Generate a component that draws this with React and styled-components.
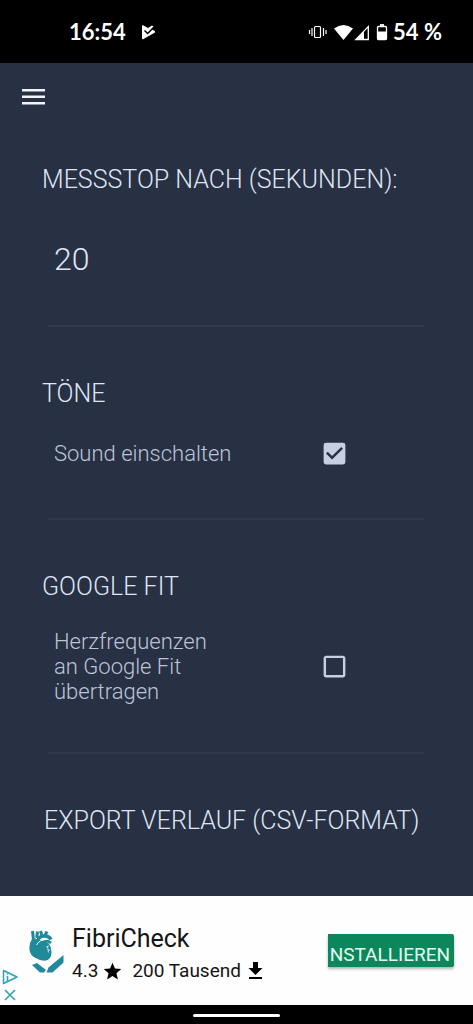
import { useState } from "react";
import styled, { createGlobalStyle } from "styled-components";
import { MdCheckBox, MdCheckBoxOutlineBlank, MdStar } from "react-icons/md";

const App = () => {
  const [seconds, setSeconds] = useState("20");
  const [sound, setSound] = useState(true);
  const [googleFit, setGoogleFit] = useState(false);

  return (
    <Page>
      <GlobalStyle />
      <StatusBar>
        <StatusGroup $gap={14}>
          <span>16:54</span>
          <PlayIcon />
        </StatusGroup>
        <StatusGroup $gap={1}>
          <SignalIcons />
          <span>54 %</span>
        </StatusGroup>
      </StatusBar>

      <Header>
        <MenuButton type="button" aria-label="Menü">
          <svg width="24" height="18" viewBox="0 0 24 18" fill="currentColor">
            <path d="M1 1h23v2.500H1zM1 7.500h23V10H1zM1 14h23v2.500H1z" />
          </svg>
        </MenuButton>
      </Header>

      <Settings>
        <Section>
          <Heading as="label" htmlFor="seconds">MESSSTOP NACH (SEKUNDEN):</Heading>
          <NumberInput
            id="seconds"
            inputMode="numeric"
            value={seconds}
            onChange={(e) => setSeconds(e.target.value)}
          />
        </Section>
        <Divider />
        <Section>
          <Heading>TÖNE</Heading>
          <CheckRow id="sound" text="Sound einschalten" checked={sound} onChange={setSound} />
        </Section>
        <Divider />
        <Section>
          <Heading>GOOGLE FIT</Heading>
          <CheckRow
            id="fit"
            text="Herzfrequenzen an Google Fit übertragen"
            checked={googleFit}
            onChange={setGoogleFit}
          />
        </Section>
        <Divider />
        <ExportButton type="button">EXPORT VERLAUF (CSV-FORMAT)</ExportButton>
      </Settings>

      <AdBanner>
        <AdControls>
          <AdControl type="button" aria-label="AdChoices">
            <svg width="16" height="16" viewBox="0 0 16 16" fill="none" stroke="currentColor">
              <path d="M1.500 1.500v13L15 8z" strokeWidth="1.500" strokeLinejoin="round" />
              <path d="M5.500 7v5M5.500 4.500v1.300" strokeWidth="1.600" />
            </svg>
          </AdControl>
          <AdControl type="button" aria-label="Schließen">
            <svg width="16" height="16" viewBox="0 0 16 16" fill="none" stroke="currentColor">
              <path d="M3 3l10 10M13 3L3 13" strokeWidth="1.600" />
            </svg>
          </AdControl>
        </AdControls>
        <HeartLogo />
        <AdText>
          <AdTitle>FibriCheck</AdTitle>
          <AdMeta>
            <span>4.3</span>
            <MdStar size={21} />
            <Downloads>200 Tausend</Downloads>
            <DownloadIcon />
          </AdMeta>
        </AdText>
        <InstallButton type="button">NSTALLIEREN</InstallButton>
      </AdBanner>

      <NavBar>
        <NavPill />
      </NavBar>
    </Page>
  );
};

export default App;

const CheckRow = ({ id, text, checked, onChange }) => (
  <Row>
    <RowLabel htmlFor={id}>{text}</RowLabel>
    <CheckBox>
      <input
        id={id}
        type="checkbox"
        checked={checked}
        onChange={(e) => onChange(e.target.checked)}
      />
      {checked ? <MdCheckBox size={29} /> : <MdCheckBoxOutlineBlank size={29} />}
    </CheckBox>
  </Row>
);

const PlayIcon = () => (
  <svg width="16" height="16" viewBox="0 0 16 16">
    <path d="M2 2q0-1.200 1-.7l5 2.700L12 1.500l1.500 1L12 5.500l3 1.700v1.200L3 15.200q-1 .3-1-.7z" fill="#fff" />
    <path d="M4.500 6.500l3.200 3L13.500 3.500" stroke="#000" strokeWidth="1.500" fill="none" />
  </svg>
);

// vibrate, wifi, mobile signal, battery
const SignalIcons = () => (
  <svg width="84" height="20" viewBox="0 0 84 20" fill="none" stroke="#fff">
    <rect x="6.500" y="4.500" width="6" height="11" rx="1" strokeWidth="1.200" />
    <path d="M4 6v8M15.500 6v8M1.500 8v4M18 8v4" strokeWidth="1.200" />
    <path d="M26 6.500Q35.500-.5 45 6.500L35.500 18z" fill="#fff" stroke="none" />
    <path d="M60.300 4.500v13h-12.500z" strokeWidth="1.300" />
    <path d="M56 9.500v8h-8z" fill="#fff" stroke="none" />
    <path d="M72 3h4" strokeWidth="1.800" />
    <rect x="69.500" y="4.500" width="9" height="13" rx="1" strokeWidth="1.300" />
    <path d="M69.500 9.500h9v8h-9z" fill="#fff" stroke="none" />
  </svg>
);

const DownloadIcon = () => (
  <svg width="15" height="18" viewBox="0 0 15 18" fill="currentColor">
    <path d="M5 0h5v6h4.500l-7 7-7-7H5zM1 15h13v2H1z" />
  </svg>
);

const HeartLogo = () => (
  <svg width="36" height="44" viewBox="0 0 36 44">
    <g fill="#20899a">
      <path d="M3 10Q0 15 .5 21q.5 5 6 8 7 4 12 2 4-2 4-8 0-5-3-9l-6-3z" />
      <path d="M3 36l5-2 9 7-2 2.500H11z" />
      <path d="M34.500 26v7.500L23.500 43.500H17.500l2-5z" />
    </g>
    <g fill="none" stroke="#20899a" strokeWidth="3">
      <path d="M3.500 2l1 9M8.500 2.500l-1 8" />
      <path d="M7 13q3-6 8-6 5-.5 7 3.500" strokeWidth="3.500" />
      <path d="M11.500 2l1.500 5M18 2.500L15.500 7" />
      <path d="M15 12q4-1 7 2" strokeWidth="2.500" />
    </g>
    <path d="M7.500 16q3-5.500 10-5.500M6 8.500l2 1.500" stroke="#fff" strokeWidth="1" fill="none" />
    <path d="M17 18l3-1M18.500 17.500l1 6M19 20.500l2 1" stroke="#fff" strokeWidth=".7" fill="none" />
  </svg>
);

const GlobalStyle = createGlobalStyle`
  * {
    box-sizing: border-box;
  }

  body {
    margin: 0;
    font-family: Roboto, sans-serif;
    background: #283043;
  }

  button, input {
    font: inherit;
    color: inherit;
    border: none;
    background: none;
    padding: 0;
    margin: 0;
  }

  button {
    cursor: pointer;
  }

  svg {
    display: block;
    flex-shrink: 0;
  }
`;

const Page = styled.div`
  min-height: 100vh;
  display: flex;
  flex-direction: column;
  background: #283043;
`;

const StatusBar = styled.div`
  display: flex;
  align-items: center;
  justify-content: space-between;
  height: 63px;
  padding: 0 31px 0 69px;
  background: #000;
  color: #fff;
  font-family: Lato, sans-serif;
  font-size: 22px;
  font-weight: 700;
`;

const StatusGroup = styled.div`
  display: flex;
  align-items: center;
  gap: ${(props) => props.$gap}px;
`;

const Header = styled.header`
  display: flex;
  align-items: center;
  height: 67px;
  padding: 0 21px;
`;

const MenuButton = styled.button`
  color: #f2f4fb;
`;

const Settings = styled.main`
  flex: 1;
  padding: 35px 38px 60px 42px;
`;

const Section = styled.section`
  padding-bottom: 48px;
`;

const Heading = styled.h2`
  display: block;
  margin: 0 0 27px;
  font-size: 25px;
  font-weight: 300;
  line-height: 30px;
  color: #dfe5f5;
`;

const NumberInput = styled.input`
  display: block;
  width: 100%;
  height: 36px;
  margin-top: 46px;
  padding-left: 12px;
  font-size: 32px;
  font-weight: 300;
  line-height: 36px;
  color: #dfe5f5;
`;

const Divider = styled.hr`
  height: 2px;
  margin: 0 11px 52px 6px;
  border: none;
  background: #30384a;
`;

const Row = styled.div`
  display: grid;
  grid-template-columns: 47% 1fr;
  align-items: center;
  min-height: 34px;
  padding-left: 12px;
`;

const RowLabel = styled.label`
  font-size: 22px;
  font-weight: 300;
  line-height: 25px;
  color: #bcc4da;
`;

const CheckBox = styled.span`
  display: grid;
  justify-self: center;
  color: #c9cfe2;

  input {
    appearance: none;
    cursor: pointer;
  }

  input, svg {
    grid-area: 1 / 1;
  }

  svg {
    pointer-events: none;
  }
`;

const ExportButton = styled.button`
  padding: 0 2px;
  font-size: 25px;
  font-weight: 300;
  line-height: 30px;
  text-align: left;
  color: #dfe5f5;
`;

const AdBanner = styled.aside`
  display: flex;
  align-items: center;
  height: 109px;
  padding-right: 19px;
  background: #fefefe;
  color: #151515;
`;

const AdControls = styled.div`
  display: flex;
  flex-direction: column;
  align-self: flex-end;
  gap: 2px;
  padding: 0 11px 2px 2px;
`;

const AdControl = styled.button`
  color: #2fa3b5;
`;

const AdText = styled.div`
  flex: 1;
  padding: 9px 0 0 7px;
`;

const AdTitle = styled.div`
  font-size: 25px;
  line-height: 32px;
`;

const AdMeta = styled.div`
  display: flex;
  align-items: center;
  font-size: 19px;
  line-height: 32px;

  svg {
    margin-left: 4px;
    color: #000;
  }
`;

const Downloads = styled.span`
  padding: 0 3px 0 9px;
`;

const InstallButton = styled.button`
  height: 33px;
  padding: 9px 4px 0 2px;
  border-radius: 0 2px 2px 0;
  background: #0b875b;
  box-shadow: 0 2px 3px rgba(0, 0, 0, 0.3);
  color: #e4fff4;
  font-size: 19px;
  line-height: 24px;
`;

const NavBar = styled.div`
  display: flex;
  align-items: center;
  justify-content: center;
  height: 19px;
  padding-top: 2px;
  background: #000;
`;

const NavPill = styled.div`
  width: 87px;
  height: 3px;
  border-radius: 2px;
  background: #fff;
`;
